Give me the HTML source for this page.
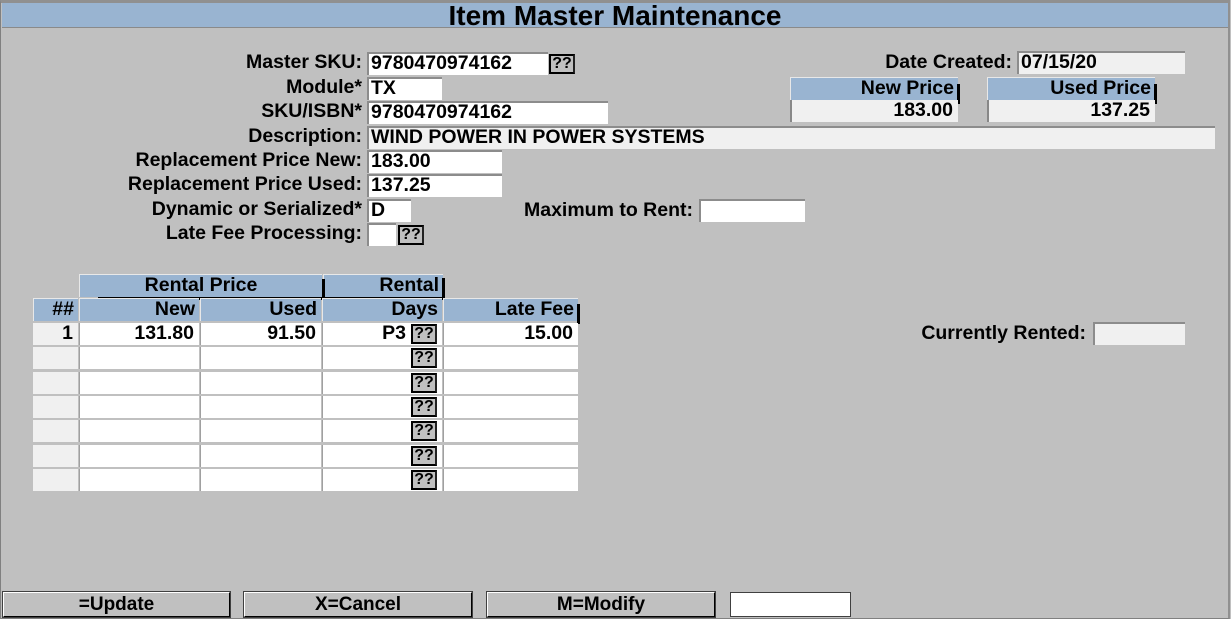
<!DOCTYPE html>
<html><head><style>
*{margin:0;padding:0;box-sizing:border-box}
body{width:1231px;height:619px;background:#c0c0c0;font-family:"Liberation Sans",Arial,sans-serif;font-weight:bold;font-size:19.5px;color:#000;position:relative;overflow:hidden}
.a{position:absolute}
.frame{left:0;top:0;width:1230px;height:619px;border:1px solid #808080;border-right:2px solid #909090;border-top:3px solid #909090}
.title{left:2px;top:3px;width:1226px;height:25px;background:#99b4d1;border-bottom:1px solid #8a8a8a;text-align:center;font-size:28px;line-height:25px}
.l{text-align:right;line-height:21px;height:22px;white-space:nowrap}
.f{background:#fff;border-top:2px solid #8c8c8c;border-left:2px solid #8c8c8c;line-height:18px;padding-left:2px;height:23px;white-space:nowrap}
.g{background:#f0f0f0}
.q{width:26px;height:20px;background:#c0c0c0;border:2px solid #000;border-right-color:#222;font-size:16px;line-height:16px;text-align:center}
.h{background:#99b4d1;text-align:right;padding-right:4px;line-height:21px;height:23px;border-top:1px solid #e8e8e8;border-left:1px solid #e8e8e8;white-space:nowrap}
.c{background:#fff;height:22px;text-align:right;padding-right:5px;line-height:21px;border-left:1px solid #a0a0a0}
.n{background:#f0f0f0;height:22px;text-align:right;padding-right:5px;line-height:21px}
.b{height:25px;background:#c0c0c0;border:1px solid #000;border-left-color:#fff;border-top-color:#fff;outline:1px solid #404040;text-align:center;line-height:23px;font-size:19px}
.bar{width:3px;background:#000}
</style></head><body>
<div class="a frame"></div>
<div class="a title">Item Master Maintenance</div>

<div class="a l" style="left:100px;width:262px;top:52px">Master SKU:</div>
<div class="a f" style="left:367px;top:52px;width:181px">9780470974162</div>
<div class="a q" style="left:549px;top:54px">??</div>
<div class="a l" style="left:100px;width:262px;top:77px">Module*</div>
<div class="a f" style="left:367px;top:77px;width:75px">TX</div>
<div class="a l" style="left:100px;width:262px;top:101px">SKU/ISBN*</div>
<div class="a f" style="left:367px;top:101px;width:241px">9780470974162</div>
<div class="a l" style="left:100px;width:262px;top:126px">Description:</div>
<div class="a f g" style="left:367px;top:126px;width:848px">WIND POWER IN POWER SYSTEMS</div>
<div class="a l" style="left:60px;width:302px;top:150px">Replacement Price New:</div>
<div class="a f" style="left:367px;top:150px;width:135px">183.00</div>
<div class="a l" style="left:60px;width:302px;top:174px">Replacement Price Used:</div>
<div class="a f" style="left:367px;top:174px;width:135px">137.25</div>
<div class="a l" style="left:60px;width:302px;top:199px">Dynamic or Serialized*</div>
<div class="a f" style="left:367px;top:199px;width:44px">D</div>
<div class="a l" style="left:60px;width:302px;top:223px">Late Fee Processing:</div>
<div class="a f" style="left:367px;top:223px;width:29px"></div>
<div class="a q" style="left:398px;top:225px">??</div>
<div class="a l" style="left:480px;width:213px;top:200px">Maximum to Rent:</div>
<div class="a f" style="left:699px;top:199px;width:106px"></div>

<div class="a l" style="left:800px;width:212px;top:52px">Date Created:</div>
<div class="a f g" style="left:1017px;top:51px;width:168px">07/15/20</div>
<div class="a h" style="left:790px;top:77px;width:168px">New Price</div>
<div class="a bar" style="left:957px;top:84px;height:20px"></div>
<div class="a n" style="left:790px;top:100px;width:168px;border-left:2px solid #888">183.00</div>
<div class="a h" style="left:987px;top:77px;width:168px">Used Price</div>
<div class="a bar" style="left:1154px;top:84px;height:20px"></div>
<div class="a n" style="left:987px;top:100px;width:168px;border-left:2px solid #888">137.25</div>

<div class="a h" style="left:79px;top:274px;width:243px;text-align:center;padding:0">Rental Price</div>
<div class="a h" style="left:323px;top:274px;width:120px">Rental</div>
<div class="a bar" style="left:442px;top:278px;height:20px"></div>
<div class="a bar" style="left:322px;top:279px;height:18px"></div>
<div class="a" style="left:98px;top:297px;width:345px;height:3px;background:#000"></div>
<div class="a h" style="left:33px;top:298px;width:45px">##</div>
<div class="a h" style="left:79px;top:298px;width:120px">New</div>
<div class="a h" style="left:200px;top:298px;width:121px">Used</div>
<div class="a h" style="left:322px;top:298px;width:120px">Days</div>
<div class="a h" style="left:443px;top:298px;width:135px">Late Fee</div>
<div class="a bar" style="left:577px;top:304px;height:20px"></div>

<div class="a n" style="left:33px;top:323px;width:45px">1</div>
<div class="a c" style="left:79px;top:323px;width:120px">131.80</div>
<div class="a c" style="left:200px;top:323px;width:121px">91.50</div>
<div class="a c" style="left:322px;top:323px;width:120px;padding-right:36px">P3</div>
<div class="a q" style="left:411px;top:324px">??</div>
<div class="a c" style="left:443px;top:323px;width:135px">15.00</div>

<div class="a n" style="left:33px;top:347px;width:45px"></div><div class="a c" style="left:79px;top:347px;width:120px"></div><div class="a c" style="left:200px;top:347px;width:121px"></div><div class="a c" style="left:322px;top:347px;width:120px"></div><div class="a q" style="left:411px;top:348px">??</div><div class="a c" style="left:443px;top:347px;width:135px"></div>
<div class="a n" style="left:33px;top:372px;width:45px"></div><div class="a c" style="left:79px;top:372px;width:120px"></div><div class="a c" style="left:200px;top:372px;width:121px"></div><div class="a c" style="left:322px;top:372px;width:120px"></div><div class="a q" style="left:411px;top:373px">??</div><div class="a c" style="left:443px;top:372px;width:135px"></div>
<div class="a n" style="left:33px;top:396px;width:45px"></div><div class="a c" style="left:79px;top:396px;width:120px"></div><div class="a c" style="left:200px;top:396px;width:121px"></div><div class="a c" style="left:322px;top:396px;width:120px"></div><div class="a q" style="left:411px;top:397px">??</div><div class="a c" style="left:443px;top:396px;width:135px"></div>
<div class="a n" style="left:33px;top:420px;width:45px"></div><div class="a c" style="left:79px;top:420px;width:120px"></div><div class="a c" style="left:200px;top:420px;width:121px"></div><div class="a c" style="left:322px;top:420px;width:120px"></div><div class="a q" style="left:411px;top:421px">??</div><div class="a c" style="left:443px;top:420px;width:135px"></div>
<div class="a n" style="left:33px;top:445px;width:45px"></div><div class="a c" style="left:79px;top:445px;width:120px"></div><div class="a c" style="left:200px;top:445px;width:121px"></div><div class="a c" style="left:322px;top:445px;width:120px"></div><div class="a q" style="left:411px;top:446px">??</div><div class="a c" style="left:443px;top:445px;width:135px"></div>
<div class="a n" style="left:33px;top:469px;width:45px"></div><div class="a c" style="left:79px;top:469px;width:120px"></div><div class="a c" style="left:200px;top:469px;width:121px"></div><div class="a c" style="left:322px;top:469px;width:120px"></div><div class="a q" style="left:411px;top:470px">??</div><div class="a c" style="left:443px;top:469px;width:135px"></div>

<div class="a l" style="left:880px;width:206px;top:323px">Currently Rented:</div>
<div class="a f g" style="left:1093px;top:322px;width:92px"></div>

<div class="a b" style="left:3px;top:592px;width:227px">=Update</div>
<div class="a b" style="left:244px;top:592px;width:228px">X=Cancel</div>
<div class="a b" style="left:487px;top:592px;width:228px">M=Modify</div>
<div class="a" style="left:730px;top:592px;width:121px;height:25px;background:#fff;border:1px solid #404040"></div>
</body></html>
